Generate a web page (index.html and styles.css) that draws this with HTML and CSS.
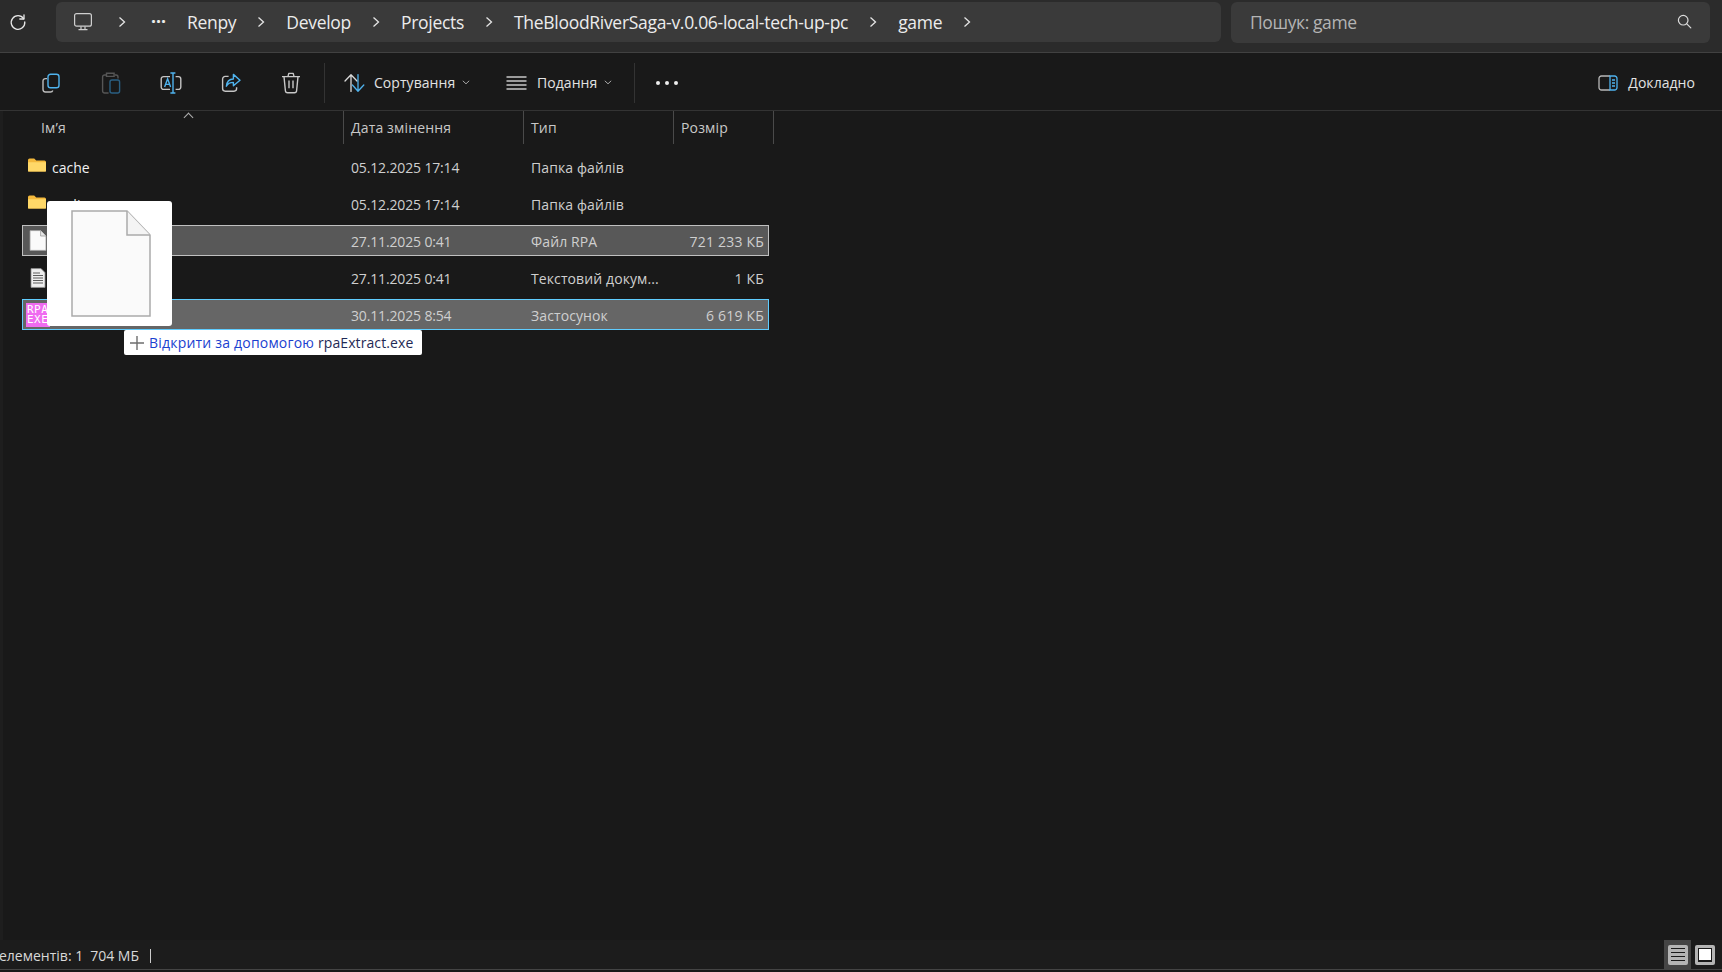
FILE: index.html
```html
<!DOCTYPE html>
<html lang="uk">
  <head>
    <meta charset="utf-8">
    <title>game</title>
    <link rel="stylesheet" href="styles.css">
  </head>
  <body>
    <div class="explorer">
      <header class="address-row">
        <button class="refresh">
          <svg width="18" height="18" viewBox="0 0 18 18" fill="none" stroke="#e8e8e8" stroke-width="1.3" stroke-linecap="round" stroke-linejoin="round">
            <path d="M14.6 5.6A6.8 6.8 0 1 0 15.8 9" />
            <path d="M15 1.8v4.2h-4.2" />
          </svg>
        </button>
        <nav class="breadcrumb">
          <svg class="crumb-pc" width="20" height="20" viewBox="0 0 20 20" fill="none" stroke="#cfcfcf" stroke-width="1.2" stroke-linejoin="round">
            <rect x="1.6" y="1.6" width="16.8" height="12.6" rx="2" />
            <path d="M8 14.4v3M12 14.4v3M5.5 17.6h9" />
          </svg>
          <svg class="chev" width="8" height="12" viewBox="0 0 8 12" fill="none" stroke="#e4e4e4" stroke-width="1.3"><path d="M1.5 1.5 6.5 6l-5 4.5" /></svg>
          <span class="crumb-dots">···</span>
          <span class="crumb">Renpy</span>
          <svg class="chev" width="8" height="12" viewBox="0 0 8 12" fill="none" stroke="#e4e4e4" stroke-width="1.3"><path d="M1.5 1.5 6.5 6l-5 4.5" /></svg>
          <span class="crumb">Develop</span>
          <svg class="chev" width="8" height="12" viewBox="0 0 8 12" fill="none" stroke="#e4e4e4" stroke-width="1.3"><path d="M1.5 1.5 6.5 6l-5 4.5" /></svg>
          <span class="crumb">Projects</span>
          <svg class="chev" width="8" height="12" viewBox="0 0 8 12" fill="none" stroke="#e4e4e4" stroke-width="1.3"><path d="M1.5 1.5 6.5 6l-5 4.5" /></svg>
          <span class="crumb">TheBloodRiverSaga-v.0.06-local-tech-up-pc</span>
          <svg class="chev" width="8" height="12" viewBox="0 0 8 12" fill="none" stroke="#e4e4e4" stroke-width="1.3"><path d="M1.5 1.5 6.5 6l-5 4.5" /></svg>
          <span class="crumb">game</span>
          <svg class="chev" width="8" height="12" viewBox="0 0 8 12" fill="none" stroke="#e4e4e4" stroke-width="1.3"><path d="M1.5 1.5 6.5 6l-5 4.5" /></svg>
        </nav>
        <div class="search">
          <span>Пошук: game</span>
          <svg width="15" height="15" viewBox="0 0 15 15" fill="none" stroke="#dcdcdc" stroke-width="1.2" stroke-linecap="round">
            <circle cx="6.2" cy="6.2" r="4.8" />
            <path d="m9.8 9.8 4 4" />
          </svg>
        </div>
      </header>

      <div class="toolbar">
        <div class="tool-icons">
          <svg width="20" height="20" viewBox="0 0 20 20" fill="none" stroke-width="1.4">
            <path d="M6 5.6H4.4A2.4 2.4 0 0 0 2 8v8.6A2.4 2.4 0 0 0 4.4 19h5.2a2.4 2.4 0 0 0 2.2-1.6" stroke="#bdbdbd" />
            <rect x="7" y="1.2" width="11" height="13.6" rx="2.6" stroke="#4fb3ee" />
          </svg>
          <svg width="20" height="22" viewBox="0 0 20 22" fill="none" stroke-width="1.4">
            <path d="M5 3H3.6A2 2 0 0 0 1.6 5v14a2 2 0 0 0 2 2h4M14 3h1a2 2 0 0 1 2 2v1.5M5.5 1.2h7.6V4.4H5.5z" stroke="#565656" />
            <rect x="9" y="8" width="9.6" height="13" rx="2" stroke="#2a5f82" />
          </svg>
          <svg class="tool-wide" width="22" height="22" viewBox="0 0 22 22" fill="none" stroke-width="1.4">
            <path d="M10 4.6H3.6A2.4 2.4 0 0 0 1.2 7v8a2.4 2.4 0 0 0 2.4 2.4H10M15.6 4.6h2.8A2.4 2.4 0 0 1 20.8 7v8a2.4 2.4 0 0 1-2.4 2.4h-2.8" stroke="#c4c4c4" />
            <path d="M13 1h-2.6M15.4 1H13v20h2.4M13 21h-2.6" stroke="#4fb3ee" />
            <path d="m4.6 15 3-8.2 3 8.2M5.6 12.4h4" stroke="#4fb3ee" />
          </svg>
          <svg width="20" height="20" viewBox="0 0 20 20" fill="none" stroke-width="1.4" stroke-linejoin="round">
            <path d="M7.6 3.4H4.2a2.6 2.6 0 0 0-2.6 2.6v9.6a2.6 2.6 0 0 0 2.6 2.6h8.8a2.6 2.6 0 0 0 2.6-2.6v-1.4" stroke="#c4c4c4" />
            <path d="M12.4 1.4 19 7.2l-6.6 5.6V9.4c-3.6 0-5.6 1.2-7 3.8.4-4.4 2.8-7 7-7.2z" stroke="#4fb3ee" />
          </svg>
          <svg width="20" height="22" viewBox="0 0 20 22" fill="none" stroke="#c8c8c8" stroke-width="1.4" stroke-linejoin="round">
            <path d="M1 4.6h18M3 4.6l1.4 14.2a2.2 2.2 0 0 0 2.2 2h6.8a2.2 2.2 0 0 0 2.2-2L17 4.6M7 4.4 7.8 1.4h4.4L13 4.4M8 8.6v7.6M12 8.6v7.6" />
          </svg>
        </div>
        <span class="tool-sep"></span>
        <div class="tool-menu sort-menu">
          <svg width="21" height="20" viewBox="0 0 21 20" fill="none" stroke-width="1.3" stroke-linecap="round" stroke-linejoin="round">
            <path d="M7 18.4V2M1 8l6-6.2L13 8" stroke="#dadada" />
            <path d="M14 1.600V18M8.400 12l5.600 6.200 5.800-6.200" stroke="#4fb3ee" />
          </svg>
          <span>Сортування</span>
          <svg class="menu-chev" width="8" height="5" viewBox="0 0 8 5" fill="none" stroke="#a8a8a8" stroke-width="1"><path d="m.8.8 3.2 3 3.2-3" /></svg>
        </div>
        <div class="tool-menu view-menu">
          <svg width="21" height="16" viewBox="0 0 21 16" fill="none" stroke="#c6c6c6" stroke-width="1.4">
            <path d="M.5 2h20M.5 6h20M.5 10h20M.5 14h20" />
          </svg>
          <span>Подання</span>
          <svg class="menu-chev" width="8" height="5" viewBox="0 0 8 5" fill="none" stroke="#a8a8a8" stroke-width="1"><path d="m.8.8 3.2 3 3.2-3" /></svg>
        </div>
        <span class="tool-sep"></span>
        <div class="more-dots"><i></i><i></i><i></i></div>
        <div class="details-btn">
          <svg width="20" height="16" viewBox="0 0 20 16" fill="none" stroke-width="1.3">
            <path d="M12 1H3.4A2.4 2.4 0 0 0 1 3.4v9.2A2.4 2.4 0 0 0 3.4 15H12" stroke="#b8b8b8" />
            <path d="M12 1h4.6A2.4 2.4 0 0 1 19 3.4v9.2a2.4 2.4 0 0 1-2.4 2.4H12z" stroke="#4fb3ee" />
            <path d="M14 5h3M14 8h3M14 11h3" stroke="#4fb3ee" />
          </svg>
          <span>Докладно</span>
        </div>
      </div>

      <main class="listing">
        <span class="sort-arrow"></span>
        <div class="list-head">
          <div class="col-name">Ім’я</div>
          <div class="col-date">Дата змінення</div>
          <div class="col-type">Тип</div>
          <div class="col-size">Розмір</div>
        </div>

        <div class="row">
          <div class="cell-name">
            <svg class="folder" width="20" height="16" viewBox="0 0 20 16"><path d="M1 3a1.6 1.6 0 0 1 1.6-1.6h4.6l2 2H17.4A1.6 1.6 0 0 1 19 5v8.4a1.2 1.2 0 0 1-1.2 1.2H2.2A1.2 1.2 0 0 1 1 13.4z" fill="#f4b93c" /><path d="M1 5.2h18v8.2a1.2 1.2 0 0 1-1.2 1.2H2.2A1.2 1.2 0 0 1 1 13.4z" fill="#ffd868" /></svg>
            <span>cache</span>
          </div>
          <div>05.12.2025 17:14</div>
          <div>Папка файлів</div>
          <div class="cell-size"></div>
        </div>
        <div class="row">
          <div class="cell-name">
            <svg class="folder" width="20" height="16" viewBox="0 0 20 16"><path d="M1 3a1.6 1.6 0 0 1 1.6-1.6h4.6l2 2H17.4A1.6 1.6 0 0 1 19 5v8.4a1.2 1.2 0 0 1-1.2 1.2H2.2A1.2 1.2 0 0 1 1 13.4z" fill="#f4b93c" /><path d="M1 5.2h18v8.2a1.2 1.2 0 0 1-1.2 1.2H2.2A1.2 1.2 0 0 1 1 13.4z" fill="#ffd868" /></svg>
            <span>audio</span>
          </div>
          <div>05.12.2025 17:14</div>
          <div>Папка файлів</div>
          <div class="cell-size"></div>
        </div>
        <div class="row row-selected">
          <div class="cell-name">
            <svg class="file-icon" width="18" height="21" viewBox="0 0 18 21"><path d="M1 .6h10.6L17 6v14.4H1z" fill="#fafafa" stroke="#9a9a9a" stroke-width=".8" /><path d="M11.6.6V6H17" fill="#e6e6e6" stroke="#9a9a9a" stroke-width=".8" /></svg>
            <span>archive.rpa</span>
          </div>
          <div>27.11.2025 0:41</div>
          <div>Файл RPA</div>
          <div class="cell-size">721 233 КБ</div>
        </div>
        <div class="row">
          <div class="cell-name">
            <svg class="file-icon" width="18" height="20" viewBox="0 0 18 20"><path d="M2 .6h10L16 4.600v14.800H2z" fill="#eeeeee" stroke="#8c8c8c" stroke-width=".8" /><path d="M4 5h7M4 7.500h10M4 10h10M4 12.500h10M4 15h10" stroke="#5c5c5c" stroke-width="1" /></svg>
            <span>log.txt</span>
          </div>
          <div>27.11.2025 0:41</div>
          <div>Текстовий докум...</div>
          <div class="cell-size">1 КБ</div>
        </div>
        <div class="row row-focused">
          <div class="cell-name">
            <div class="exe-icon">RPA<br>EXE</div>
            <span>rpaExtract.exe</span>
          </div>
          <div>30.11.2025 8:54</div>
          <div>Застосунок</div>
          <div class="cell-size">6 619 КБ</div>
        </div>

        <!-- drag preview and hint sit on top of the list -->
        <div class="drag-ghost">
          <svg width="80" height="107" viewBox="0 0 80 107">
            <path d="M1 1h55l23 24v81H1z" fill="#fafafa" stroke="#aaaaaa" stroke-width="1.500" />
            <path d="M56 1v24h23" fill="#f4f4f4" stroke="#aaaaaa" stroke-width="1.500" />
          </svg>
        </div>
        <div class="drag-hint">
          <svg width="14" height="14" viewBox="0 0 14 14" stroke="#6e6e6e" stroke-width="1.400"><path d="M7 0v14M0 7h14" /></svg>
          <span><b>Відкрити за допомогою</b> rpaExtract.exe</span>
        </div>
      </main>

      <footer class="status">
        <div class="status-text">
          <span>елементів: 1</span>
          <span>704 МБ</span>
          <span class="status-bar-sep"></span>
        </div>
        <div class="view-toggle">
          <div class="view-btn view-btn-active">
            <div class="view-glyph"><i></i><i></i><i></i><i></i></div>
          </div>
          <div class="view-btn">
            <div class="view-glyph view-glyph-tile"><i></i></div>
          </div>
        </div>
      </footer>
    </div>
  </body>
</html>
```

FILE: styles.css
```css
html,
body {
  margin: 0;
  height: 100%;
  overflow: hidden;
}

body {
  background-color: #191919;
  color: #e2e2e2;
  font-family: "Open Sans", "Noto Sans", sans-serif;
  font-size: 14px;
}

.explorer {
  height: 972px;
  display: flex;
  flex-direction: column;
}

/* address row */
.address-row {
  height: 53px;
  box-sizing: border-box;
  padding: 2px 12px 0 0;
  background-color: #2b2b2b;
  border-bottom: 1px solid #414141;
  display: flex;
  align-items: flex-start;
  flex: none;
}

.refresh {
  width: 56px;
  height: 40px;
  padding: 0 0 0 9px;
  border: none;
  background: none;
  display: flex;
  align-items: center;
}

.breadcrumb {
  width: 1165px;
  height: 40px;
  box-sizing: border-box;
  padding-left: 17px;
  background-color: #3a3a3a;
  border-radius: 6px;
  display: flex;
  align-items: center;
  gap: 21px;
  font-size: 17.5px;
  color: #ececec;
  letter-spacing: -0.3px;
}

.crumb-pc {
  margin-right: 4px;
}

.crumb-dots {
  width: 14px;
  margin-left: 4px;
  margin-right: 1px;
  font-weight: 700;
  line-height: 1;
  letter-spacing: 0;
}

.search {
  width: 479px;
  height: 41px;
  margin-left: 10px;
  box-sizing: border-box;
  padding: 0 18px 2px 19px;
  background-color: #3a3a3a;
  border-radius: 6px;
  display: flex;
  align-items: center;
  justify-content: space-between;
  font-size: 17.5px;
  letter-spacing: -0.4px;
  color: #b4b4b4;
}

/* toolbar */
.toolbar {
  height: 58px;
  box-sizing: border-box;
  padding: 2px 27px 0 41px;
  border-bottom: 1px solid #333333;
  display: flex;
  align-items: center;
  flex: none;
  font-size: 14px;
  letter-spacing: 0.05px;
}

.tool-icons {
  width: 283px;
  display: flex;
  align-items: center;
  gap: 40px;
}

.tool-wide {
  margin: 0 -1px;
}

.tool-sep {
  width: 1px;
  height: 40px;
  background-color: #333333;
}

.tool-menu {
  display: flex;
  align-items: center;
}

.tool-menu span {
  margin-left: 9px;
  margin-right: 7px;
}

.sort-menu {
  width: 162px;
  margin-left: 19px;
}

.view-menu {
  width: 128px;
  margin-left: 0;
}

.view-menu span {
  margin-left: 10px;
}

.more-dots {
  margin-left: 21px;
  display: flex;
  gap: 5px;
}

.more-dots i {
  width: 4px;
  height: 4px;
  border-radius: 50%;
  background-color: #eeeeee;
}

.details-btn {
  margin-left: auto;
  display: flex;
  align-items: center;
  gap: 10px;
}

/* file list */
.listing {
  flex: 1;
  position: relative;
  border-left: 3px solid #1e1e1e;
  padding-left: 19px;
}

.sort-arrow {
  position: absolute;
  left: 182px;
  top: 3px;
  width: 6px;
  height: 6px;
  border-left: 1px solid #b0b0b0;
  border-top: 1px solid #b0b0b0;
  transform: rotate(45deg);
}

.list-head {
  height: 33px;
  display: grid;
  grid-template-columns: 322px 180px 150px 100px;
  color: #c8c8c8;
  margin-bottom: 7px;
  letter-spacing: 0.15px;
}

.list-head > div {
  box-sizing: border-box;
  height: 33px;
  padding-left: 7px;
  border-right: 1px solid #4a4a4a;
  line-height: 33px;
}

.list-head .col-name {
  padding-left: 19px;
}

.row {
  width: 747px;
  height: 31px;
  box-sizing: border-box;
  padding-top: 2px;
  margin-bottom: 6px;
  display: grid;
  grid-template-columns: 322px 180px 150px 1fr;
  align-items: center;
  color: #cfcfcf;
}

.row > div {
  padding-left: 7px;
}

.row > div:nth-child(2) {
  letter-spacing: -0.15px;
}

.row > div:nth-child(3) {
  letter-spacing: 0.1px;
}

.row-selected {
  background-color: #585858;
  box-shadow: inset 0 0 0 1px #c0c0c0;
}

.row-focused {
  background-color: #666666;
  box-shadow: inset 0 0 0 1px #60cdff;
}

.row .cell-name {
  padding-left: 0;
  display: flex;
  align-items: center;
  gap: 5px;
  margin-left: 4px;
  margin-top: -2px;
  color: #f2f2f2;
}

.row .cell-name span {
  padding-top: 2px;
}

.row .cell-size {
  padding: 0 5px 0 0;
  text-align: right;
  letter-spacing: 0.2px;
}

.folder {
  margin-left: 1px;
  margin-top: -4px;
}

.file-icon {
  margin-left: 3px;
}

.exe-icon {
  width: 24px;
  height: 24px;
  background-color: #ef6bf0;
  color: #ffffff;
  font-family: "DejaVu Sans Mono", monospace;
  font-size: 11px;
  line-height: 10px;
  letter-spacing: 0.5px;
  padding: 2px 0 0 1px;
  box-sizing: border-box;
  overflow: hidden;
}

.drag-ghost {
  position: absolute;
  left: 44px;
  top: 90px;
  width: 125px;
  height: 125px;
  box-sizing: border-box;
  padding: 9px 0 0 24px;
  background-color: #ffffff;
  border-radius: 3px;
}

.drag-hint {
  position: absolute;
  left: 121px;
  top: 219px;
  height: 25px;
  box-sizing: border-box;
  padding: 0 9px 0 6px;
  background-color: #ffffff;
  border-radius: 2px;
  display: flex;
  align-items: center;
  gap: 5px;
  color: #1f2a55;
  font-size: 14px;
  letter-spacing: 0.1px;
  white-space: nowrap;
}

.drag-hint b {
  font-weight: 400;
  color: #1a3fd0;
  letter-spacing: 0.2px;
}

/* status bar */
.status {
  height: 29px;
  margin-bottom: 2px;
  padding-right: 4px;
  background-color: #1c1c1c;
  border-bottom: 1px solid #444444;
  flex: none;
  display: flex;
  align-items: center;
  justify-content: space-between;
  font-size: 14px;
  color: #d8d8d8;
}

.status-text {
  display: flex;
  align-items: center;
  gap: 7px;
  margin-left: -1px;
  padding-top: 2px;
}

.status-bar-sep {
  width: 1px;
  height: 14px;
  margin-left: 4px;
  background-color: #cccccc;
}

.view-toggle {
  display: flex;
  height: 29px;
}

.view-btn {
  width: 27px;
  display: flex;
  align-items: center;
  justify-content: center;
}

.view-btn-active {
  background-color: #454545;
}

.view-glyph {
  width: 20px;
  height: 20px;
  box-sizing: border-box;
  padding: 3px 3px;
  border-radius: 2px;
  background-color: #b4b4b4;
  display: flex;
  flex-direction: column;
  justify-content: space-between;
}

.view-glyph i {
  display: block;
  height: 1px;
  background-color: #1a1a1a;
}

.view-glyph-tile {
  padding: 3px;
}

.view-glyph-tile i {
  flex: 1;
  background-color: #ffffff;
  border: 1px solid #1a1a1a;
  border-bottom-width: 2px;
}
```
